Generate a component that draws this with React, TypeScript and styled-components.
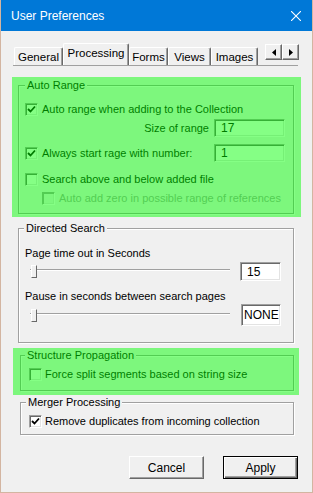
import type { ReactNode } from "react";

import styled, { createGlobalStyle } from "styled-components";

const GlobalStyle = createGlobalStyle`
  html, body {
    margin: 0;
    padding: 0;
    background: #f0f0f0;
  }
  body {
    font-family: "Liberation Sans", Arial, sans-serif;
    font-size: 11px;
    color: #000;
  }
`;

const Window = styled.div`
  width: 313px;
  height: 493px;
  box-sizing: border-box;
  border: 1px solid #d3b5a1;
  border-top: none;
  background: #f0f0f0;
  display: flex;
  flex-direction: column;
`;

const TitleBar = styled.div`
  height: 31px;
  flex-shrink: 0;
  background: #0078d7;
  color: #fff;
  font-size: 12px;
  display: flex;
  align-items: center;
  padding: 0 11px 0 10px;
  & > svg {
    margin-left: auto;
  }
`;

const Body = styled.div`
  display: flex;
  flex-direction: column;
  padding: 0 11px 0 11px;
`;

const TabStrip = styled.div`
  display: flex;
  align-items: flex-end;
  height: 22px;
  margin: 12px 3px 0 1px;
  padding-left: 1px;
  border-bottom: 1px solid #a0a0a0;
`;

const Tab = styled.div<{ $w: number; $active?: boolean }>`
  width: ${(p) => p.$w}px;
  height: ${(p) => (p.$active ? 22 : 18)}px;
  box-sizing: border-box;
  display: flex;
  align-items: center;
  justify-content: center;
  border-top: 1px solid #fff;
  border-left: 1px solid #fff;
  border-right: 1px solid #696969;
  box-shadow: inset -1px 0 0 #a0a0a0;
  border-radius: 2px 2px 0 0;
  font-size: 11.5px;
  padding-bottom: ${(p) => (p.$active ? 4 : 0)}px;
`;

const Arrows = styled.div`
  display: flex;
  margin-left: auto;
  align-self: flex-start;
  margin-top: 1px;
  margin-right: -1px;
`;

const ArrowButton = styled.div`
  width: 17px;
  height: 16px;
  box-sizing: border-box;
  display: flex;
  align-items: center;
  justify-content: center;
  border: 1px solid;
  border-color: #fff #696969 #696969 #fff;
  box-shadow: inset -1px -1px 0 #a0a0a0;
  background: #f0f0f0;
`;

const Panel = styled.div`
  display: flex;
  flex-direction: column;
`;

const Highlight = styled.div<{ $m: string; $p: string }>`
  position: relative;
  margin: ${(p) => p.$m};
  padding: ${(p) => p.$p};
  &::after {
    content: "";
    position: absolute;
    inset: 0;
    background: rgba(0, 255, 0, 0.48);
    pointer-events: none;
  }
`;

const Frame = styled.div<{ $m?: string; $p: string }>`
  margin: ${(p) => p.$m ?? "0"};
  padding: ${(p) => p.$p};
  border: 1px solid #a0a0a0;
  box-shadow: 1px 1px 0 #fff, inset 1px 1px 0 #fff;
  display: flex;
  flex-direction: column;
`;

const Caption = styled.span<{ $ml: number }>`
  align-self: flex-start;
  margin: -8px 0 0 ${(p) => p.$ml}px;
  padding: 0 2px;
  height: 14px;
  line-height: 14px;
  background: #f0f0f0;
`;

const Row = styled.div<{ $mt: number; $indent?: number; $gap?: number }>`
  display: flex;
  align-items: center;
  gap: ${(p) => p.$gap ?? 4}px;
  margin-top: ${(p) => p.$mt}px;
  height: 18px;
  padding-left: ${(p) => p.$indent ?? 0}px;
  white-space: nowrap;
`;

const FieldRow = styled.div<{ $mt: number }>`
  display: grid;
  grid-template-columns: 1fr 71px;
  column-gap: 5px;
  align-items: center;
  height: 18px;
  margin-top: ${(p) => p.$mt}px;
  white-space: nowrap;
`;

const RightLabel = styled.span`
  justify-self: end;
`;

const Check = styled.span<{ $disabled?: boolean }>`
  width: 13px;
  height: 13px;
  flex-shrink: 0;
  box-sizing: border-box;
  border: 1px solid;
  border-color: #a0a0a0 #fff #fff #a0a0a0;
  box-shadow: inset 1px 1px 0 ${(p) => (p.$disabled ? "#a0a0a0" : "#696969")},
    inset -1px -1px 0 #e3e3e3;
  background: ${(p) => (p.$disabled ? "#f0f0f0" : "#fff")};
  display: flex;
  align-items: center;
  justify-content: center;
`;

const Label = styled.span<{ $disabled?: boolean }>`
  color: ${(p) => (p.$disabled ? "#a0a0a0" : "#000")};
`;

const Input = styled.div<{ $w?: number; $h?: number; $ml?: number; $pl?: number }>`
  width: ${(p) => p.$w ?? 71}px;
  height: ${(p) => p.$h ?? 18}px;
  margin-left: ${(p) => p.$ml ?? 0}px;
  flex-shrink: 0;
  box-sizing: border-box;
  border: 1px solid;
  border-color: #a0a0a0 #fff #fff #a0a0a0;
  box-shadow: inset 1px 1px 0 #696969, inset -1px -1px 0 #e3e3e3;
  background: #fff;
  display: flex;
  align-items: center;
  padding-left: ${(p) => p.$pl ?? 6}px;
  font-size: 12px;
  overflow: hidden;
`;

const Text = styled.div<{ $mt: number }>`
  height: 14px;
  line-height: 14px;
  margin-top: ${(p) => p.$mt}px;
`;

const SliderRow = styled.div<{ $mt: number }>`
  display: flex;
  align-items: flex-start;
  padding-left: 5px;
  margin-top: ${(p) => p.$mt}px;
`;

const Slider = styled.div<{ $mt: number }>`
  position: relative;
  width: 200px;
  height: 13px;
  margin-top: ${(p) => p.$mt}px;
  &::before {
    content: "";
    position: absolute;
    left: 0;
    right: 0;
    top: 4px;
    height: 1px;
    background: #a0a0a0;
    border-bottom: 1px solid #fff;
  }
`;

const Thumb = styled.div`
  position: absolute;
  left: 1px;
  top: 0;
  width: 6px;
  height: 13px;
  box-sizing: border-box;
  border: 1px solid;
  border-color: #fff #696969 #696969 #fff;
  background: #f0f0f0;
`;

const Buttons = styled.div`
  display: flex;
  justify-content: flex-end;
  gap: 19px;
  margin: 21px 3px 0 0;
`;

const Button = styled.div<{ $default?: boolean }>`
  width: 75px;
  height: 23px;
  box-sizing: border-box;
  display: flex;
  align-items: center;
  justify-content: center;
  font-size: 12px;
  background: #f0f0f0;
  border: 1px solid;
  border-color: ${(p) => (p.$default ? "#000" : "#fff #696969 #696969 #fff")};
  box-shadow: ${(p) =>
    p.$default
      ? "inset 1px 1px 0 #fff, inset -1px -1px 0 #696969, inset -2px -2px 0 #a0a0a0"
      : "inset -1px -1px 0 #a0a0a0"};
`;

function CheckMark(): ReactNode {
  return (
    <svg width="9" height="9" viewBox="0 0 9 9">
      <path d="M1 4 L3.5 6.5 L8 1.5" fill="none" stroke="#000" strokeWidth="1.8" />
    </svg>
  );
}

function CheckBox({ checked, disabled }: { checked?: boolean; disabled?: boolean }): ReactNode {
  return <Check $disabled={disabled}>{checked && <CheckMark />}</Check>;
}

function CloseIcon(): ReactNode {
  return (
    <svg width="10" height="10" viewBox="0 0 10 10">
      <path d="M0 0 L10 10 M10 0 L0 10" stroke="#fff" strokeWidth="1.1" />
    </svg>
  );
}

function Arrow({ dir }: { dir: "left" | "right" }): ReactNode {
  return (
    <svg width="4" height="7" viewBox="0 0 4 7">
      <path d={dir === "left" ? "M4 0 L0 3.5 L4 7 Z" : "M0 0 L4 3.5 L0 7 Z"} fill="#000" />
    </svg>
  );
}

export default function App(): ReactNode {
  return (
    <>
      <GlobalStyle />
      <Window>
        <TitleBar>
          User Preferences
          <CloseIcon />
        </TitleBar>
        <Body>
          <TabStrip>
            <Tab $w={49}>General</Tab>
            <Tab $w={66} $active>
              Processing
            </Tab>
            <Tab $w={39}>Forms</Tab>
            <Tab $w={43}>Views</Tab>
            <Tab $w={47}>Images</Tab>
            <Arrows>
              <ArrowButton>
                <Arrow dir="left" />
              </ArrowButton>
              <ArrowButton>
                <Arrow dir="right" />
              </ArrowButton>
            </Arrows>
          </TabStrip>
          <Panel>
            <Highlight $m="11px 0 0 0" $p="8px 7px 3px 6px">
              <Frame $p="0 8px 6px 6px">
                <Caption $ml={0}>Auto Range</Caption>
                <Row $mt={8}>
                  <CheckBox checked />
                  <Label>Auto range when adding to the Collection</Label>
                </Row>
                <FieldRow $mt={1}>
                  <RightLabel>Size of range</RightLabel>
                  <Input>17</Input>
                </FieldRow>
                <FieldRow $mt={7}>
                  <Row $mt={0}>
                    <CheckBox checked />
                    <Label>Always start rage with number:</Label>
                  </Row>
                  <Input>1</Input>
                </FieldRow>
                <Row $mt={8}>
                  <CheckBox />
                  <Label>Search above and below added file</Label>
                </Row>
                <Row $mt={1} $indent={17}>
                  <CheckBox disabled />
                  <Label $disabled>Auto add zero in possible range of references</Label>
                </Row>
              </Frame>
            </Highlight>

            <Frame $m="11px 7px 0 6px" $p="0 8px 16px 6px">
              <Caption $ml={-1}>Directed Search</Caption>
              <Text $mt={11}>Page time out in Seconds</Text>
              <SliderRow $mt={2}>
                <Slider $mt={3}>
                  <Thumb />
                </Slider>
                <Input $w={41} $h={19} $ml={10}>
                  15
                </Input>
              </SliderRow>
              <Text $mt={8}>Pause in seconds between search pages</Text>
              <SliderRow $mt={1}>
                <Slider $mt={5}>
                  <Thumb />
                </Slider>
                <Input $w={40} $h={22} $ml={11} $pl={2}>
                  NONE
                </Input>
              </SliderRow>
            </Frame>

            <Highlight $m="5px 2px 0 1px" $p="7px 5px 4px 7px">
              <Frame $p="0 8px 7px 8px">
                <Caption $ml={-4}>Structure Propagation</Caption>
                <Row $mt={3} $gap={3}>
                  <CheckBox />
                  <Label>Force split segments based on string size</Label>
                </Row>
              </Frame>
            </Highlight>

            <Frame $m="7px 7px 0 8px" $p="0 8px 4px 8px">
              <Caption $ml={-3}>Merger Processing</Caption>
              <Row $mt={3} $gap={3}>
                <CheckBox checked />
                <Label>Remove duplicates from incoming collection</Label>
              </Row>
            </Frame>
          </Panel>
          <Buttons>
            <Button>Cancel</Button>
            <Button $default>Apply</Button>
          </Buttons>
        </Body>
      </Window>
    </>
  );
}
